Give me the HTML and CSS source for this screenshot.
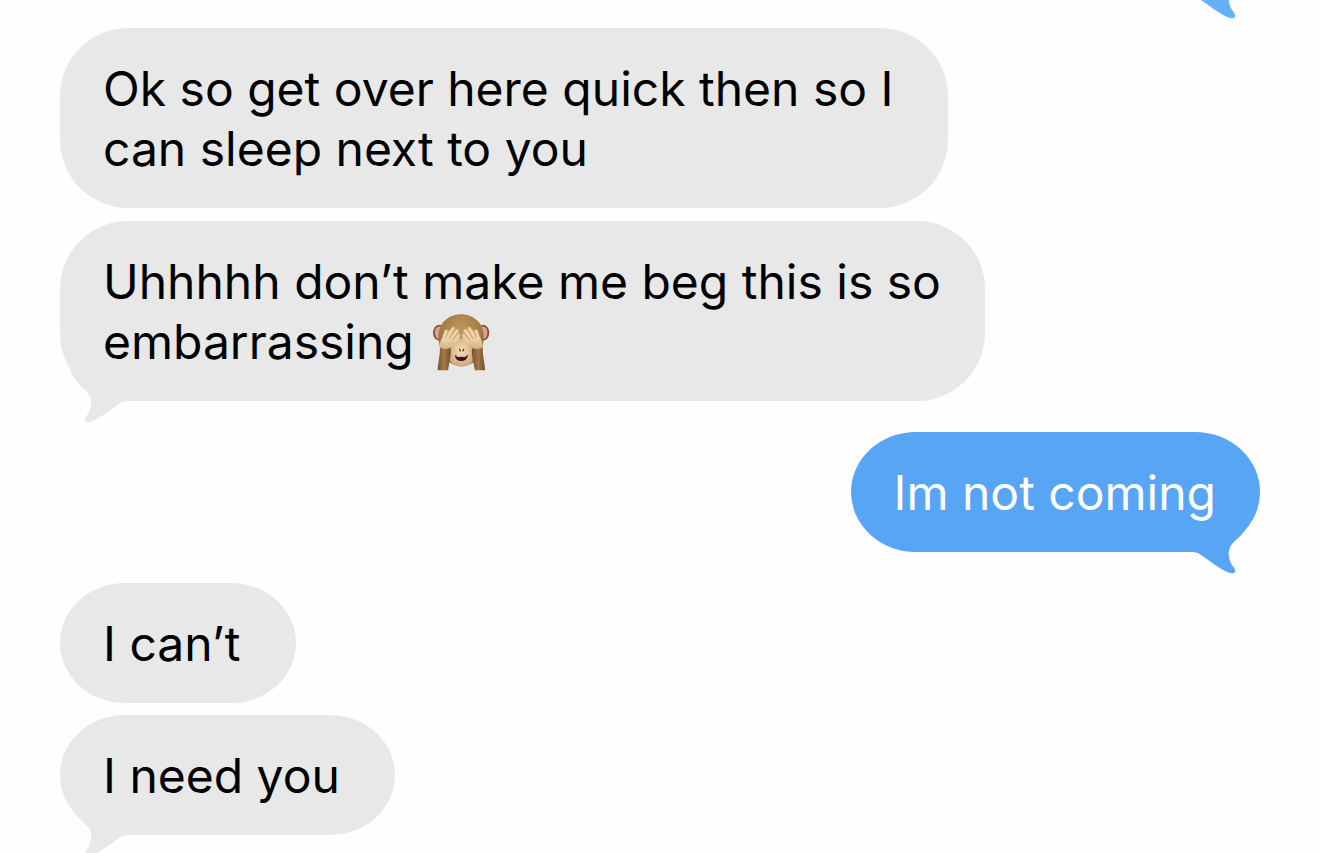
FILE: index.html
```
<!DOCTYPE html>
<html lang="en">
    <head>
        <meta charset="UTF-8">
        <meta name="viewport" content="width=device-width, initial-scale=1.0">
        <title>Messages</title>
        <link rel="stylesheet" href="styles.css">
    </head>
    <body>
        <!-- shared tail shape, flipped in css for sent bubbles -->
        <svg class="defs" width="0" height="0" aria-hidden="true">
            <symbol id="tail" viewBox="0 0 70 60">
                <path d="M10 7C14 15 18 21 23 25C30 31 32 35 31 43C30 50 25 54 25 56C24 60 28 60 33 58C45 52 51 46 59 41C63 38 66 38 70 38L70 30L30 7Z"/>
            </symbol>
        </svg>
        <main class="thread">
            <div class="bubble sent scrolled">
                <svg class="tail" aria-hidden="true"><use href="#tail"/></svg>
            </div>
            <div class="bubble received roomy tall">
                <p>Ok so get over here quick then so I<br>can sleep next to you</p>
            </div>
            <div class="bubble received tall">
                <p>Uhhhhh don’t make me beg this is so<br>embarrassing <svg class="emoji" viewBox="34 26 176 180" role="img" aria-label="See-no-evil monkey">
                    <defs>
                        <radialGradient id="fur" cx="0.5" cy="0.3" r="0.7">
                            <stop offset="0" stop-color="#bd975c"/>
                            <stop offset="0.65" stop-color="#a27b44"/>
                            <stop offset="1" stop-color="#705129"/>
                        </radialGradient>
                        <radialGradient id="face" cx="0.5" cy="0.45" r="0.6">
                            <stop offset="0" stop-color="#f5dfb8"/>
                            <stop offset="1" stop-color="#c9a574"/>
                        </radialGradient>
                        <linearGradient id="hand" x1="0" y1="0" x2="0" y2="1">
                            <stop offset="0" stop-color="#dfbd8d"/>
                            <stop offset="0.6" stop-color="#ecd0a4"/>
                            <stop offset="1" stop-color="#d2ad7a"/>
                        </linearGradient>
                        <linearGradient id="arm" x1="0" y1="0" x2="1" y2="0">
                            <stop offset="0" stop-color="#77552d"/>
                            <stop offset="0.5" stop-color="#a27a47"/>
                            <stop offset="1" stop-color="#6c4c28"/>
                        </linearGradient>
                    </defs>
                    <ellipse cx="56" cy="88" rx="19" ry="24" fill="#805d36"/>
                    <ellipse cx="57" cy="88" rx="14" ry="19" fill="#dfa19a"/>
                    <ellipse cx="189" cy="88" rx="19" ry="24" fill="#805d36"/>
                    <ellipse cx="188" cy="88" rx="14" ry="19" fill="#dfa19a"/>
                    <path d="M122 32C82 32 54 61 54 98C54 130 66 162 88 178C108 193 138 193 158 178C180 162 191 130 191 98C191 61 162 32 122 32Z" fill="url(#fur)"/>
                    <path d="M123 104C110 104 104 119 94 132C84 147 80 163 90 176C104 195 143 195 156 176C166 163 162 147 152 132C142 119 136 104 123 104Z" fill="url(#face)"/>
                    <path d="M118 138L120 143M130 138L128 143" stroke="#4c3520" stroke-width="4" stroke-linecap="round"/>
                    <path d="M103 156C116 160 130 160 143 156C141 168 134 174 123 174C112 174 105 168 103 156Z" fill="#44131a"/>
                    <path d="M108 157C118 160 128 160 138 157L136 161H110Z" fill="#fff"/>
                    <path d="M58 130H90C94 155 86 177 83 202H51C52 178 59 160 58 130Z" fill="url(#arm)"/>
                    <path d="M156 130H188C187 160 194 178 195 202H164C160 177 152 155 156 130Z" fill="url(#arm)"/>
                    <g id="paw">
                        <path d="M57 132C57 119 61 110 65 102L72 81C75 74 84 78 82 85L95 71C101 67 106 74 103 79L108 77C115 76 118 82 114 87L117 91C121 93 121 98 118 102L98 130C87 139 68 140 57 132Z" fill="url(#hand)"/>
                        <path d="M82 85L76 101M103 79L87 105M114 87L96 110" fill="none" stroke="#c49a67" stroke-width="3" stroke-linecap="round"/>
                        <path d="M78 83L72 101M97 76L82 101M109 82L93 105" fill="none" stroke="#f2d9b2" stroke-width="5" stroke-linecap="round"/>
                    </g>
                    <use href="#paw" transform="translate(245) scale(-1 1)"/>
                </svg></p>
                <svg class="tail" aria-hidden="true"><use href="#tail"/></svg>
            </div>
            <div class="bubble sent spaced">
                <p>Im not coming</p>
                <svg class="tail" aria-hidden="true"><use href="#tail"/></svg>
            </div>
            <div class="bubble received roomy spaced">
                <p>I can’t</p>
            </div>
            <div class="bubble received roomy">
                <p>I need you</p>
                <svg class="tail" aria-hidden="true"><use href="#tail"/></svg>
            </div>
        </main>
    </body>
</html>
```
FILE: styles.css
```
html {
    overflow: hidden;
}

body {
    margin: 0;
    background-color: #fefefe;
    font-family: Inter, "Liberation Sans", sans-serif;
}

.defs {
    position: absolute;
}

.thread {
    display: flex;
    flex-direction: column;
    padding: 0 60px 30px;
}

.bubble {
    position: relative;
    padding: 31px 44px 29px 43px;
    margin-top: 12px;
    border-radius: 65px / 60px;
    font-size: 48px;
    line-height: 60px;
}

.bubble p {
    position: relative;
    z-index: 1;
    margin: 0;
}

.tall {
    margin-top: 13px;
    border-radius: 68px;
}

.received {
    align-self: flex-start;
    background-color: #e8e8e8;
    color: #000;
    fill: #e8e8e8;
}

.sent {
    align-self: flex-end;
    background-color: #59a5f5;
    color: #fff;
    fill: #59a5f5;
}

.roomy {
    padding-right: 55px;
}

.spaced {
    margin-top: 31px;
}

/* older message, only its tail is still in view */
.scrolled {
    width: 100px;
    margin-top: -63px;
    margin-bottom: 18px;
    background-color: #65b0f7;
    fill: #65b0f7;
}

.tail {
    position: absolute;
    left: 0;
    bottom: -22px;
    width: 70px;
    height: 60px;
}

.sent .tail {
    left: auto;
    right: 0;
    transform: scaleX(-1);
}

.emoji {
    width: 58px;
    height: 60px;
    margin-left: 5px;
    vertical-align: top;
}
```
